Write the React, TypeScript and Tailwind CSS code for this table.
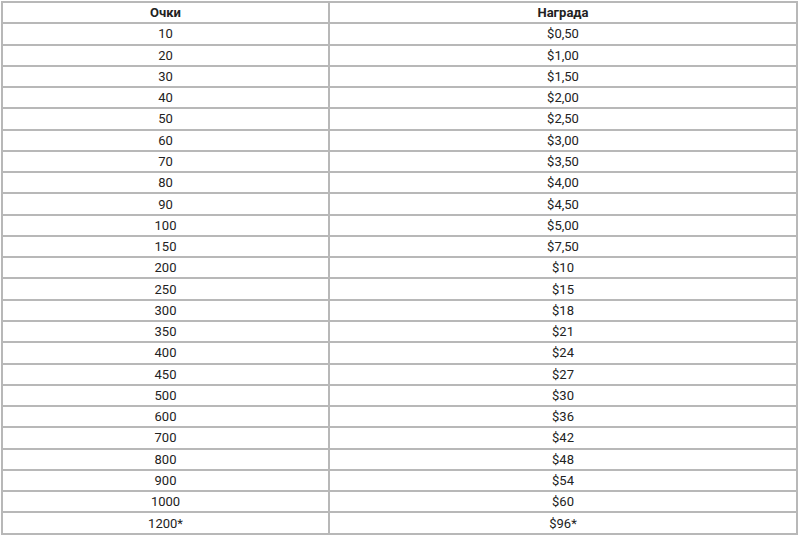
const rows: [string, string][] = [
  ["10", "$0,50"],
  ["20", "$1,00"],
  ["30", "$1,50"],
  ["40", "$2,00"],
  ["50", "$2,50"],
  ["60", "$3,00"],
  ["70", "$3,50"],
  ["80", "$4,00"],
  ["90", "$4,50"],
  ["100", "$5,00"],
  ["150", "$7,50"],
  ["200", "$10"],
  ["250", "$15"],
  ["300", "$18"],
  ["350", "$21"],
  ["400", "$24"],
  ["450", "$27"],
  ["500", "$30"],
  ["600", "$36"],
  ["700", "$42"],
  ["800", "$48"],
  ["900", "$54"],
  ["1000", "$60"],
  ["1200*", "$96*"],
];

export default function App() {
  return (
    <div className="w-[800px] h-[535px] bg-white pl-[1px] pt-[1px] font-['Roboto',sans-serif] text-[13px] leading-[16px] text-[#222]">
      <table className="w-[797px] border-collapse table-fixed">
        <colgroup>
          <col className="w-[327px]" />
          <col />
        </colgroup>
        <thead>
          <tr className="h-[21.3px]">
            <th className="border-2 border-[#b8b8b8] font-bold text-center p-0 pt-[1px]">Очки</th>
            <th className="border-2 border-[#b8b8b8] font-bold text-center p-0 pt-[1px]">Награда</th>
          </tr>
        </thead>
        <tbody>
          {rows.map(([pts, prize]) => (
            <tr key={pts} className="h-[21.28px]">
              <td className="border-2 border-[#b8b8b8] text-center p-0 pt-[1px]">{pts}</td>
              <td className="border-2 border-[#b8b8b8] text-center p-0 pt-[1px]">{prize}</td>
            </tr>
          ))}
        </tbody>
      </table>
    </div>
  );
}
